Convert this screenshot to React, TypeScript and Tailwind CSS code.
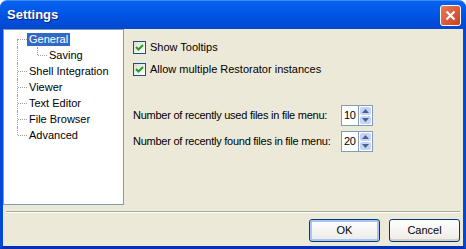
import React from "react";

const font = { fontFamily: '"Liberation Sans", Arial, sans-serif' };

const treeItems = [
    { label: "General", indent: 0, selected: true },
    { label: "Saving", indent: 1 },
    { label: "Shell Integration", indent: 0 },
    { label: "Viewer", indent: 0 },
    { label: "Text Editor", indent: 0 },
    { label: "File Browser", indent: 0 },
    { label: "Advanced", indent: 0 },
];

function Checkbox({ label }: { label: string }) {
    return (
        <div className="flex items-center h-[13px]">
            <div className="w-[13px] h-[13px] border border-[#1c5180] bg-gradient-to-br from-[#dcdcd7] to-white flex items-center justify-center">
                <svg width="9" height="9" viewBox="0 0 9 9">
                    <path d="M1 4 L3.5 6.5 L8 2" stroke="#21a121" strokeWidth="2" fill="none" />
                </svg>
            </div>
            <span className="ml-[4px] text-[11px] text-black whitespace-nowrap">{label}</span>
        </div>
    );
}

function Spin({ value }: { value: string }) {
    return (
        <div className="flex h-[21px]">
            <div className="w-[18px] border border-[#7f9db9] bg-white flex items-center pl-[2px] text-[11px] tracking-[-0.3px]">{value}</div>
            <div className="flex flex-col w-[14px] border-y border-r border-[#7f9db9] bg-white p-px gap-px">
                <div className="flex-1 rounded-[2px] bg-[#c3d3fd] flex items-center justify-center">
                    <svg width="7" height="4" viewBox="0 0 7 4"><path d="M0 4 L3.5 0 L7 4 Z" fill="#4d6185" /></svg>
                </div>
                <div className="flex-1 rounded-[2px] bg-[#c3d3fd] flex items-center justify-center">
                    <svg width="7" height="4" viewBox="0 0 7 4"><path d="M0 0 L3.5 4 L7 0 Z" fill="#4d6185" /></svg>
                </div>
            </div>
        </div>
    );
}

function XpButton({ label, isDefault }: { label: string; isDefault?: boolean }) {
    return (
        <div
            className={`w-[71px] h-[23px] rounded-[3px] border border-[#003c74] bg-gradient-to-b from-white to-[#ecebe6] flex items-center justify-center text-[11px] text-black ${
                isDefault ? "shadow-[inset_0_0_0_2px_#a9c4f5]" : "shadow-[inset_0_-2px_0_#d6d0c5]"
            }`}
        >
            {label}
        </div>
    );
}

export default function App() {
    return (
        <div className="w-[466px] h-[249px] flex flex-col bg-white select-none" style={font}>
            {/* title bar */}
            <div className="h-[29px] rounded-t-[7px] bg-gradient-to-b from-[#0a62f0] via-[#0054e3] to-[#0047d0] flex items-center justify-between pl-[7px] pr-[5px] border-t border-[#3c8cf5]">
                <span className="text-white font-bold text-[13px] [text-shadow:1px_1px_0_#0a1e7a]">Settings</span>
                <div className="w-[21px] h-[21px] rounded-[3px] border border-white bg-gradient-to-br from-[#e8795a] to-[#c8401c] flex items-center justify-center">
                    <svg width="11" height="11" viewBox="0 0 11 11">
                        <path d="M1.5 1.5 L9.5 9.5 M9.5 1.5 L1.5 9.5" stroke="white" strokeWidth="2.2" />
                    </svg>
                </div>
            </div>

            {/* body with window frame */}
            <div className="flex-1 flex flex-col bg-[#ece9d8] border-x-[3px] border-b-[3px] border-x-[#0148d8] border-b-[#0032b8]">
                <div className="h-[176px] flex">
                    <div className="w-[121px] bg-white border border-[#7f9db9] pt-[1px]">
                        {treeItems.map((item, i) => (
                            <div key={item.label} className="h-[16px] flex items-center relative">
                                {item.indent === 0 ? (
                                    <>
                                        <div
                                            className={`absolute left-[13px] w-px border-l border-dotted border-[#a0a0a0] ${
                                                i === 0 ? "top-[8px] bottom-0" : i === treeItems.length - 1 ? "top-0 h-[8px]" : "top-0 bottom-0"
                                            }`}
                                        />
                                        <div className="ml-[14px] w-[9px] border-t border-dotted border-[#a0a0a0]" />
                                    </>
                                ) : (
                                    <>
                                        <div className="absolute left-[13px] top-0 bottom-0 border-l border-dotted border-[#a0a0a0]" />
                                        <div className="absolute left-[33px] top-0 h-[8px] border-l border-dotted border-[#a0a0a0]" />
                                        <div className="ml-[34px] w-[9px] border-t border-dotted border-[#a0a0a0]" />
                                    </>
                                )}
                                <span
                                    className={`text-[11px] px-[2px] leading-[13px] ${
                                        item.selected ? "bg-[#316ac5] text-white" : "text-black"
                                    }`}
                                >
                                    {item.label}
                                </span>
                            </div>
                        ))}
                    </div>

                    <div className="flex-1 pl-[9px] pt-[12px] flex flex-col">
                        <Checkbox label="Show Tooltips" />
                        <div className="mt-[9px]">
                            <Checkbox label="Allow multiple Restorator instances" />
                        </div>
                        <div className="mt-[29px] flex flex-col gap-[5px]">
                            <div className="flex items-center">
                                <span className="w-[208px] text-[11px] text-black whitespace-nowrap tracking-[-0.25px]">Number of recently used files in file menu:</span>
                                <Spin value="10" />
                            </div>
                            <div className="flex items-center">
                                <span className="w-[208px] text-[11px] text-black whitespace-nowrap tracking-[-0.25px]">Number of recently found files in file menu:</span>
                                <Spin value="20" />
                            </div>
                        </div>
                    </div>
                </div>

                <div className="mt-[6px] mx-[3px] border-t border-[#aca899] border-b border-b-white" />

                <div className="flex justify-end gap-[9px] pr-[3px] mt-[6px]">
                    <XpButton label="OK" isDefault />
                    <XpButton label="Cancel" />
                </div>
            </div>
        </div>
    );
}
